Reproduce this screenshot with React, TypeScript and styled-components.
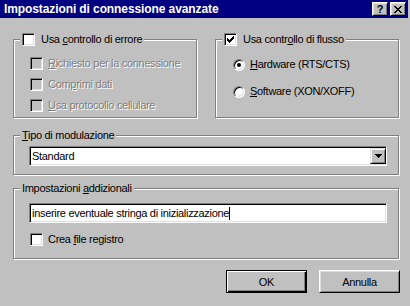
import React from 'react';
import styled, { createGlobalStyle } from 'styled-components';

const GlobalStyle = createGlobalStyle`
  html, body {
    margin: 0;
    padding: 0;
    background: #c0c0c0;
  }
  body {
    font-family: 'Liberation Sans', Arial, sans-serif;
    font-size: 11px;
    letter-spacing: -0.3px;
    color: #000;
  }
`;

const CHECK_COLS = [
  [2, 4], [3, 5], [4, 6], [5, 5], [6, 4], [7, 3], [8, 2],
];

const App = () => {
  return (
    <>
      <GlobalStyle />
      <Window>
        <TitleBar>
          <Title>Impostazioni di connessione avanzate</Title>
          <CaptionButtons>
            <CaptionButton>?</CaptionButton>
            <CaptionButton>
              <svg width='8' height='7' viewBox='0 0 8 7' shapeRendering='crispEdges'>
                {[0, 1, 2, 3, 4, 5, 6].map(i => (
                  <React.Fragment key={i}>
                    <rect x={i} y={i} width='2' height='1' fill='#000' />
                    <rect x={6 - i} y={i} width='2' height='1' fill='#000' />
                  </React.Fragment>
                ))}
              </svg>
            </CaptionButton>
          </CaptionButtons>
        </TitleBar>

        <Content>
          <TopRow>
            <Group $pad='17px 0 5px 16px' $gap={8}>
              <Legend>
                <CheckBox />
                <LegendText>Usa <u>c</u>ontrollo di errore</LegendText>
              </Legend>
              <Option>
                <CheckBox disabled />
                <Label $disabled><u>R</u>ichiesto per la connessione</Label>
              </Option>
              <Option>
                <CheckBox disabled />
                <Label $disabled>Com<u>p</u>rimi dati</Label>
              </Option>
              <Option>
                <CheckBox disabled />
                <Label $disabled><u>U</u>sa protocollo cellulare</Label>
              </Option>
            </Group>

            <Group $pad='18px 0 19px 17px' $gap={14}>
              <Legend>
                <CheckBox checked />
                <LegendText>Usa contr<u>o</u>llo di flusso</LegendText>
              </Legend>
              <Option>
                <Radio $checked />
                <Label><u>H</u>ardware (RTS/CTS)</Label>
              </Option>
              <Option>
                <Radio />
                <Label><u>S</u>oftware (XON/XOFF)</Label>
              </Option>
            </Group>
          </TopRow>

          <Group $pad='10px 11px 8px 15px' $gap={0} $mt={17}>
            <Legend>
              <Label><u>T</u>ipo di modulazione</Label>
            </Legend>
            <ComboBox>
              <FieldText>Standard</FieldText>
              <DropButton>
                <svg width='7' height='4' viewBox='0 0 7 4' shapeRendering='crispEdges'>
                  <rect x='0' y='0' width='7' height='1' fill='#000' />
                  <rect x='1' y='1' width='5' height='1' fill='#000' />
                  <rect x='2' y='2' width='3' height='1' fill='#000' />
                  <rect x='3' y='3' width='1' height='1' fill='#000' />
                </svg>
              </DropButton>
            </ComboBox>
          </Group>

          <Group $pad='14px 11px 12px 15px' $gap={10} $mt={13}>
            <Legend>
              <Label>Impostazioni <u>a</u>ddizionali</Label>
            </Legend>
            <TextBox>
              <FieldText>inserire eventuale stringa di inizializzazione</FieldText>
              <Caret />
            </TextBox>
            <Option $indent={1}>
              <CheckBox />
              <Label>Crea <u>f</u>ile registro</Label>
            </Option>
          </Group>

          <ButtonRow>
            <Button $default>OK</Button>
            <Button>Annulla</Button>
          </ButtonRow>
        </Content>
      </Window>
    </>
  );
};

const CheckBox = ({ checked, disabled }: { checked?: boolean; disabled?: boolean }) => (
  <Box $disabled={disabled}>
    {checked && (
      <svg width='11' height='11' viewBox='0 0 11 11' shapeRendering='crispEdges'>
        {CHECK_COLS.map(([x, y]) => (
          <rect key={x} x={x} y={y} width='1' height='3' fill='#000' />
        ))}
      </svg>
    )}
  </Box>
);

export default App;

const Window = styled.div`
  width: 410px;
  height: 306px;
  background: #c0c0c0;
  overflow: hidden;
`;

const TitleBar = styled.div`
  width: 408px;
  height: 18px;
  box-sizing: border-box;
  padding: 0 2px 0 4px;
  background: #000080;
  display: flex;
  align-items: center;
  justify-content: space-between;
`;

const Title = styled.span`
  color: #fff;
  font-weight: bold;
  font-size: 12px;
  letter-spacing: -0.1px;
`;

const CaptionButtons = styled.div`
  display: flex;
  gap: 2px;
`;

const CaptionButton = styled.div`
  width: 16px;
  height: 14px;
  box-sizing: border-box;
  background: #c0c0c0;
  border: 1px solid;
  border-color: #fff #000 #000 #fff;
  box-shadow: inset 1px 1px #dfdfdf, inset -1px -1px #808080;
  display: flex;
  align-items: center;
  justify-content: center;
  font-weight: bold;
  font-size: 11px;
  letter-spacing: 0;
  line-height: 1;
`;

const Content = styled.div`
  padding: 21px 11px 0 13px;
  display: flex;
  flex-direction: column;
`;

const TopRow = styled.div`
  display: grid;
  grid-template-columns: 184px 184px;
  gap: 18px;
  align-items: start;
`;

const Group = styled.div<{ $pad: string; $gap: number; $mt?: number }>`
  position: relative;
  margin-top: ${p => p.$mt ?? 0}px;
  padding: ${p => p.$pad};
  border: 1px solid #808080;
  box-shadow: inset 1px 1px #fff, 1px 1px #fff;
  display: flex;
  flex-direction: column;
  gap: ${p => p.$gap}px;
`;

const Legend = styled.div`
  position: absolute;
  top: -7px;
  left: 6px;
  padding: 0 2px;
  height: 13px;
  background: #c0c0c0;
  display: flex;
  align-items: center;
  gap: 6px;
`;

const LegendText = styled.span`
  line-height: 13px;
`;

const Option = styled.div<{ $indent?: number }>`
  display: flex;
  align-items: center;
  gap: 5px;
  height: 13px;
  padding-left: ${p => p.$indent ?? 0}px;
`;

const Label = styled.span<{ $disabled?: boolean }>`
  line-height: 13px;
  white-space: nowrap;
  color: ${p => (p.$disabled ? '#808080' : '#000')};
  text-shadow: ${p => (p.$disabled ? '1px 1px 0 #fff' : 'none')};
`;

const Box = styled.span<{ $disabled?: boolean }>`
  flex: none;
  width: 13px;
  height: 13px;
  box-sizing: border-box;
  border: 1px solid;
  border-color: #808080 #fff #fff #808080;
  box-shadow: inset 1px 1px #000, inset -1px -1px #dfdfdf;
  background: ${p => (p.$disabled ? '#c0c0c0' : '#fff')};
  display: flex;
`;

const Radio = styled.span<{ $checked?: boolean }>`
  flex: none;
  position: relative;
  width: 12px;
  height: 12px;
  margin-right: 0;
  box-sizing: border-box;
  border-radius: 50%;
  border: 1px solid;
  border-color: #808080 #fff #fff #808080;
  box-shadow: inset 1px 1px #000, inset -1px -1px #dfdfdf;
  background: #fff;

  &::after {
    content: '';
    display: ${p => (p.$checked ? 'block' : 'none')};
    position: absolute;
    left: 3px;
    top: 3px;
    width: 4px;
    height: 4px;
    border-radius: 50%;
    background: #000;
  }
`;

const Sunken = styled.div`
  height: 20px;
  box-sizing: border-box;
  border: 1px solid;
  border-color: #808080 #fff #fff #808080;
  box-shadow: inset 1px 1px #000, inset -1px -1px #dfdfdf;
  background: #fff;
  display: flex;
  align-items: center;
`;

const ComboBox = styled(Sunken)`
  padding: 0 0 0 2px;
`;

const TextBox = styled(Sunken)`
  padding: 0 2px;
`;

const FieldText = styled.span`
  line-height: 13px;
  white-space: nowrap;
`;

const Caret = styled.span`
  width: 1px;
  height: 13px;
  background: #000;
`;

const DropButton = styled.div`
  margin-left: auto;
  width: 16px;
  height: 16px;
  box-sizing: border-box;
  background: #c0c0c0;
  border: 1px solid;
  border-color: #dfdfdf #000 #000 #dfdfdf;
  box-shadow: inset 1px 1px #fff, inset -1px -1px #808080;
  display: flex;
  align-items: center;
  justify-content: center;
`;

const ButtonRow = styled.div`
  margin: 11px -1px 0 0;
  display: flex;
  justify-content: flex-end;
  gap: 12px;
`;

const Button = styled.button<{ $default?: boolean }>`
  width: 81px;
  height: 23px;
  padding: 0;
  box-sizing: border-box;
  font: inherit;
  letter-spacing: inherit;
  color: #000;
  background: #c0c0c0;
  border: 1px solid;
  border-color: ${p => (p.$default ? '#000' : '#fff #000 #000 #fff')};
  box-shadow: ${p =>
    p.$default
      ? 'inset 1px 1px #fff, inset -1px -1px #000, inset -2px -2px #808080'
      : 'inset 1px 1px #dfdfdf, inset -1px -1px #808080'};
`;
